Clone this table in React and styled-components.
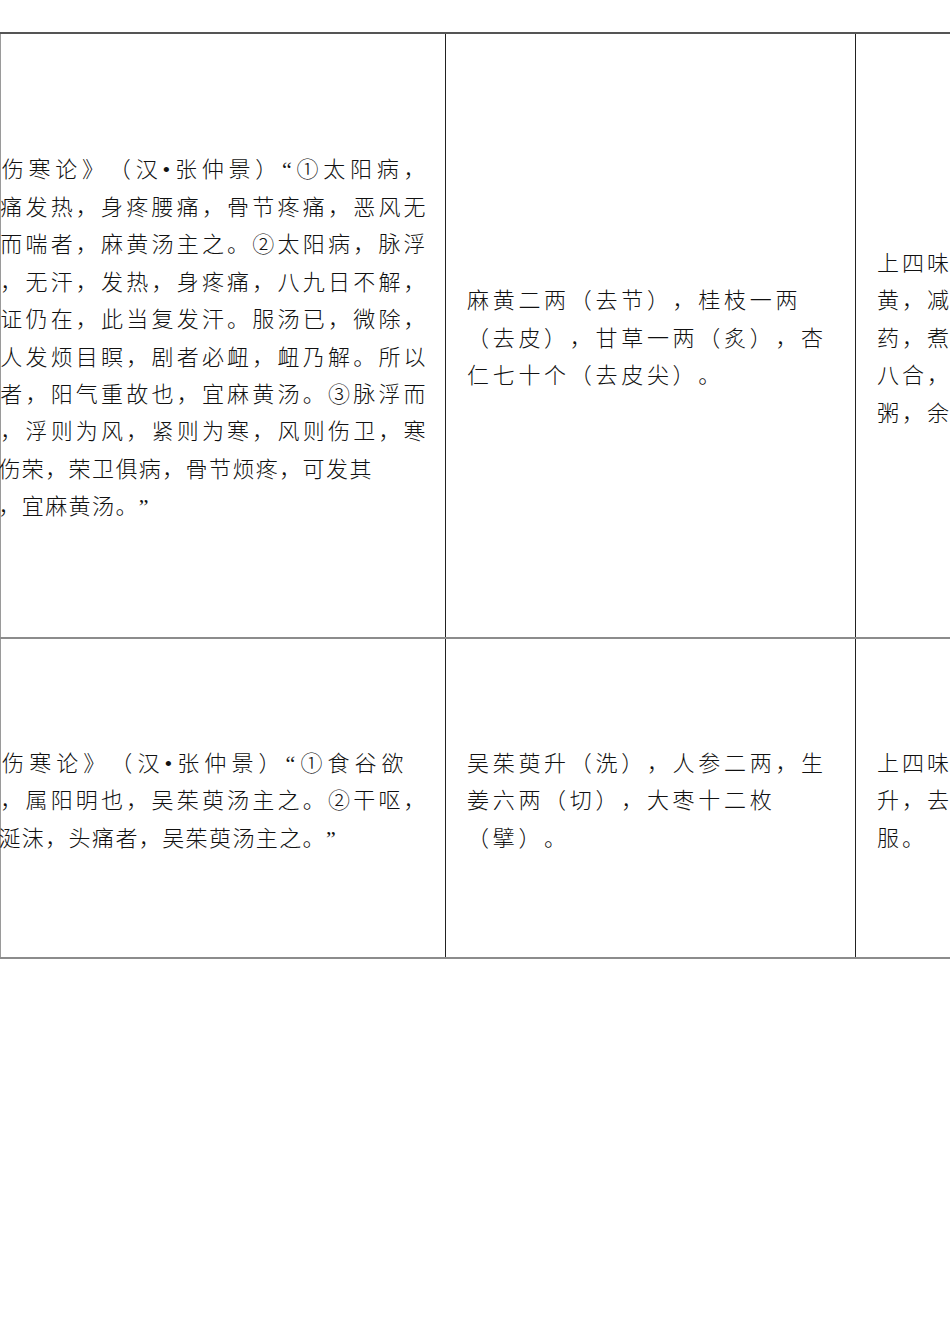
import React from 'react';
import styled, { createGlobalStyle, css } from 'styled-components';

const GlobalStyle = createGlobalStyle`
    html, body {
        margin: 0;
        padding: 0;
        background: #fff;
    }
    body {
        font-family: "Liberation Serif", "Noto Sans CJK SC", serif;
    }
`;

const Page = styled.div`
    width: 950px;
    height: 1344px;
    overflow: hidden;
    padding-top: 32px;
    box-sizing: border-box;
    background: #fff;
`;

const Table = styled.div`
    width: 1300px;
    border-top: 2px solid #555;
`;

const Row = styled.div`
    display: grid;
    grid-template-columns: 445px 410px 445px;
    height: ${(p) => p.$h}px;
    border-bottom: 2px solid #8c8c8c;
`;

const Cell = styled.div`
    display: flex;
    align-items: center;
    box-sizing: border-box;
    min-width: 0;
    padding: 6px 0 0 ${(p) => p.$pad || 0}px;
    border-left: 1px solid ${(p) => (p.$edge ? '#9a9a9a' : '#222')};
`;

const TextBlock = styled.div`
    font-size: 22px;
    line-height: 37.4px;
    font-weight: 300;
    color: #111;
    letter-spacing: ${(p) => p.$ls}px;
    margin-left: ${(p) => p.$shift || 0}px;
    text-spacing-trim: space-all;
`;

const Line = styled.div`
    white-space: nowrap;
    ${(p) =>
        p.$w &&
        css`
            white-space: normal;
            width: ${p.$w}px;
            text-align: justify;
            text-align-last: justify;
        `}
`;

const FULL = 452;

const rows = [
    {
        h: 603,
        source: [
            ['《伤寒论》（汉•张仲景）“①太阳病，', FULL],
            ['头痛发热，身疼腰痛，骨节疼痛，恶风无', FULL],
            ['汗而喘者，麻黄汤主之。②太阳病，脉浮', FULL],
            ['紧，无汗，发热，身疼痛，八九日不解，', FULL],
            ['表证仍在，此当复发汗。服汤已，微除，', FULL],
            ['其人发烦目瞑，剧者必衄，衄乃解。所以', FULL],
            ['然者，阳气重故也，宜麻黄汤。③脉浮而', FULL],
            ['紧，浮则为风，紧则为寒，风则伤卫，寒', FULL],
            ['则伤荣，荣卫俱病，骨节烦疼，可发其'],
            ['汗，宜麻黄汤。”'],
        ],
        herbs: ['麻黄二两（去节），桂枝一两', '（去皮），甘草一两（炙），杏', '仁七十个（去皮尖）。'],
        usage: [
            '上四味，以水九升，先煮麻',
            '黄，减二升，去上沫，内诸',
            '药，煮取二升半，去滓，温服',
            '八合，覆取微似汗，不须啜',
            '粥，余如桂枝法将息。',
        ],
    },
    {
        h: 318,
        source: [
            ['《伤寒论》（汉•张仲景）“①食谷欲', 430],
            ['呕，属阳明也，吴茱萸汤主之。②干呕，', FULL],
            ['吐涎沫，头痛者，吴茱萸汤主之。”'],
        ],
        herbs: ['吴茱萸升（洗），人参二两，生', '姜六两（切），大枣十二枚', '（擘）。'],
        usage: ['上四味，以水七升，煮取二', '升，去滓，温服七合，日三', '服。'],
    },
];

export default function App() {
    return (
        <>
            <GlobalStyle />
            <Page>
                <Table>
                    {rows.map((row, i) => (
                        <Row key={i} $h={row.h}>
                            <Cell $edge>
                                <TextBlock $ls={1.4} $shift={-26}>
                                    {row.source.map(([text, w], j) => (
                                        <Line key={j} $w={w}>{text}</Line>
                                    ))}
                                </TextBlock>
                            </Cell>
                            <Cell $pad={21}>
                                <TextBlock $ls={3.7}>
                                    {row.herbs.map((text, j) => (
                                        <Line key={j}>{text}</Line>
                                    ))}
                                </TextBlock>
                            </Cell>
                            <Cell $pad={21}>
                                <TextBlock $ls={3}>
                                    {row.usage.map((text, j) => (
                                        <Line key={j}>{text}</Line>
                                    ))}
                                </TextBlock>
                            </Cell>
                        </Row>
                    ))}
                </Table>
            </Page>
        </>
    );
}
